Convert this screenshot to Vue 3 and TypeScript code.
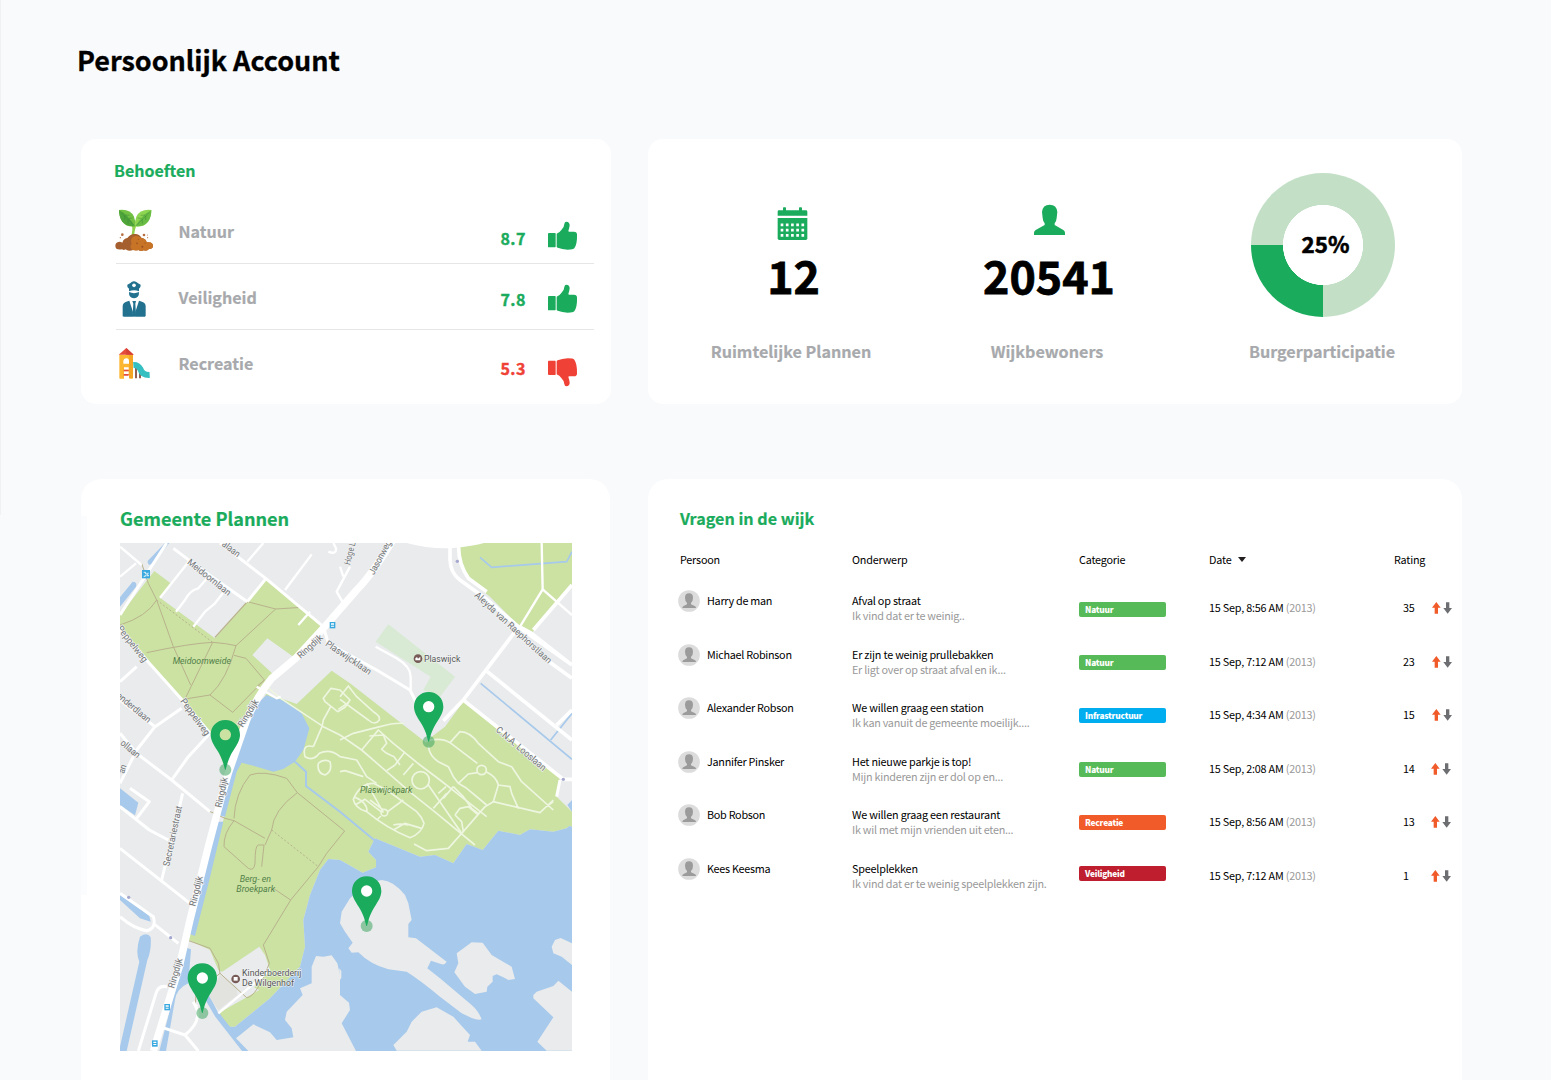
<script setup lang="ts">
interface Need {
  key: 'nature' | 'safety' | 'play'
  label: string
  score: string
  up: boolean
  scoreTop: number
  thumbTop: number
}

interface Question {
  name: string
  title: string
  excerpt: string
  category: string
  tone: string
  tagTop: number
  date: string
  rating: number
  arrowGap: number
}

interface MapLabel {
  text: string
  x: number
  y: number
  angle: number
  width: number
}

const needs: Need[] = [
  { key: 'nature', label: 'Natuur', score: '8.7', up: true, scoreTop: 29, thumbTop: 23 },
  { key: 'safety', label: 'Veiligheid', score: '7.8', up: true, scoreTop: 24, thumbTop: 20 },
  { key: 'play', label: 'Recreatie', score: '5.3', up: false, scoreTop: 27, thumbTop: 26.5 },
]

const questions: Question[] = [
  { name: 'Harry de man', title: 'Afval op straat', excerpt: 'Ik vind dat er te weinig..', category: 'Natuur', tone: 'green', tagTop: 12, date: '15 Sep, 8:56 AM', rating: 35, arrowGap: 29 },
  { name: 'Michael Robinson', title: 'Er zijn te weinig prullebakken', excerpt: 'Er ligt over op straat afval en ik...', category: 'Natuur', tone: 'green', tagTop: 11.5, date: '15 Sep, 7:12 AM', rating: 23, arrowGap: 29 },
  { name: 'Alexander Robson', title: 'We willen graag een station', excerpt: 'Ik kan vanuit de gemeente moeilijk....', category: 'Infrastructuur', tone: 'blue', tagTop: 11, date: '15 Sep, 4:34 AM', rating: 15, arrowGap: 29 },
  { name: 'Jannifer Pinsker', title: 'Het nieuwe parkje is top!', excerpt: 'Mijn kinderen zijn er dol op en...', category: 'Natuur', tone: 'green', tagTop: 11.5, date: '15 Sep, 2:08 AM', rating: 14, arrowGap: 28 },
  { name: 'Bob Robson', title: 'We willen graag een restaurant', excerpt: 'Ik wil met mijn vrienden uit eten...', category: 'Recreatie', tone: 'orange', tagTop: 11, date: '15 Sep, 8:56 AM', rating: 13, arrowGap: 28 },
  { name: 'Kees Keesma', title: 'Speelplekken', excerpt: 'Ik vind dat er te weinig speelplekken zijn.', category: 'Veiligheid', tone: 'red', tagTop: 8.5, date: '15 Sep, 7:12 AM', rating: 1, arrowGap: 28 },
]

const streetLabels: MapLabel[] = [
  { text: 'alaan', x: 334, y: 136, angle: 37, width: 60 },
  { text: 'Meidoornlaan', x: 230, y: 190, angle: 38.5, width: 158 },
  { text: 'Peppelweg', x: 20, y: 386, angle: 52, width: 130 },
  { text: 'Peppelweg', x: 210, y: 604, angle: 54, width: 130 },
  { text: 'enderdlaan', x: 18, y: 590, angle: 40, width: 124 },
  { text: 'ollaan', x: 29, y: 732, angle: 40, width: 68 },
  { text: 'an', x: 42, y: 822, angle: -72, width: 26 },
  { text: 'Ringdijk', x: 572, y: 477, angle: -42, width: 92 },
  { text: 'Ringdijk', x: 398, y: 683, angle: -58, width: 92 },
  { text: 'Ringdijk', x: 334, y: 924, angle: -78, width: 92 },
  { text: 'Ringdijk', x: 256, y: 1220, angle: -76, width: 92 },
  { text: 'Ringdijk', x: 192, y: 1466, angle: -74, width: 92 },
  { text: 'Plaswijcklaan', x: 644, y: 436, angle: 34, width: 160 },
  { text: 'Hoge L', x: 720, y: 196, angle: -76, width: 70 },
  { text: 'Jasonweg', x: 792, y: 226, angle: -62, width: 112 },
  { text: 'Secretariestraat', x: 178, y: 1100, angle: -78, width: 184 },
  { text: 'Aleyda van Raephorstlaan', x: 1092, y: 288, angle: 42.5, width: 302 },
  { text: 'C.N.A. Looslaan', x: 1156, y: 692, angle: 40.5, width: 188 },
]

const pins = [
  { x: 346, y: 660, hole: '#cbe2a3' },
  { x: 956, y: 576, hole: '#ffffff' },
  { x: 770, y: 1129, hole: '#ffffff' },
  { x: 277, y: 1390, hole: '#ffffff' },
]
</script>

<template>
  <main class="page">
    <h1 class="page-title">Persoonlijk Account</h1>

    <div class="grid">
      <section class="card needs">
        <h2 class="card-title">Behoeften</h2>
        <ul class="need-list">
          <li v-for="need in needs" :key="need.key" class="need" :class="need.key">
            <span class="need-icon">
              <svg v-if="need.key === 'nature'" width="40" height="44" viewBox="132 234 120 132">
                <path d="M188 318q4-20 2-32M189 316q2-22 8-32" fill="none" stroke="#8fd04c" stroke-width="7" />
                <path d="M147 240q34-4 45 20 6 14 3 29-24 4-38-14-10-14-10-35z" fill="#72c043" />
                <path d="M147 240q28 14 47 48-24 4-38-14-9-14-9-34z" fill="#4fa53a" />
                <path d="M244 240q-33-4-45 20-6 14-3 29 24 4 38-14 10-14 10-35z" fill="#8ed552" />
                <path d="M244 240q-28 14-47 48 24 4 38-14 9-14 9-34z" fill="#68bb43" />
                <path d="M154 248l38 38M164 258v12m10-2v13m-8-26l13 1m-2 9l11-1M237 248l-38 38M227 258v12m-10-2v13m8-26l-13 1m2 9l-11-1" fill="none" stroke="#347f35" stroke-width="1.3" />
                <path d="M136 347q0-11 12-12 6 0 9 3 3-12 15-14 10-13 23-12 12-1 20 12 13 2 15 13 19-3 19 11 0 9-12 9-6 7-16 4-7 4-16-1-7 2-14-1-15 7-25-1-4 4-10 0-20 3-20-11z" fill="#a55f2e" />
                <path d="M185 358q-7-8 0-17-5-11 3-20 12-8 26 3 14 1 16 13 19-3 19 11 0 9-12 9-6 7-16 4-7 4-16-1-10 4-20-2z" fill="#c87427" />
                <g fill="#96501f"><circle cx="201" cy="340" r="2.500" /><circle cx="217" cy="350" r="3" /><circle cx="205" cy="328" r="1.600" /><circle cx="225" cy="339" r="1.600" /></g>
                <g fill="#b66e43"><circle cx="157" cy="314" r="4" /><circle cx="222" cy="315" r="4" /><circle cx="151" cy="323" r="2" /><circle cx="233" cy="323" r="1.7" /><circle cx="232" cy="315" r="1.5" /></g>
              </svg>
              <svg v-else-if="need.key === 'safety'" width="28" height="38" viewBox="150 450 84 114">
                <g fill="#21718f">
                  <path d="M172 464q10-4 13-8 7-5 14 0 4 4 13 8 1 7-5 12v8q-15-6-30 0v-8q-7-5-5-12z" />
                  <path d="M177 486q15 7 30 0 1 18-15 19-16-1-15-19z" />
                  <path d="M158 559v-30q0-11 11-14l9-3 11 34-1 13zM227 559v-30q0-11-11-14l-9-3-11 34 1 13z" />
                  <path d="M187 513h11l-2 8 2 32-5 6-5-6 2-32z" />
                  <path d="M160 552h65v8h-65z" />
                </g>
                <circle cx="192" cy="466" r="5.5" fill="#fff" />
              </svg>
              <svg v-else width="33" height="33" viewBox="144 651 99 99">
                <path d="M198 710v35m12-30v30" stroke="#7c4134" stroke-width="5" />
                <path d="M190 705q14-1 21 12 6 19 28 18" fill="none" stroke="#36bfc0" stroke-width="18" />
                <path d="M148 674h41v70q0 2-2 2h-9v-12h-16v12h-12q-2 0-2-2z" fill="#fdb62f" />
                <path d="M189 674v70h-12v-70z" fill="#f5a524" />
                <path d="M146 674l23-20 22 20z" fill="#e54b3c" />
                <path d="M169 654l22 20h-22z" fill="#d63f34" />
                <path d="M160 701v-7q1-9 9-9t8 9v7zM162 712h14v7h-14zm0 12h14v8h-14zm0 13h14v9h-14z" fill="#fff" />
                <path d="M161 719h15v5h-15zm0 13h15v5h-15z" fill="#e54b3c" />
              </svg>
            </span>
            <span class="need-label">{{ need.label }}</span>
            <span class="score" :class="{ low: !need.up }" :style="{ marginTop: need.scoreTop + 'px' }">{{ need.score }}</span>
            <svg class="thumb" :class="{ low: !need.up }" :style="{ marginTop: need.thumbTop + 'px' }" width="31" height="30" viewBox="231 273 93 90">
              <path d="M237 309h18q2 0 2 2v38q0 3-2 3h-19q-2 0-2-2v-38q0-3 3-3z" />
              <path d="M260 311q9-3 14-11 9-9 9-18 1-7 6-7 10 1 10 11-1 9-4 17 0 2 3 2h14q9 1 9 8 1 29-8 42-3 4-20 4-17-1-30-6-3-1-3-3z" />
            </svg>
          </li>
        </ul>
      </section>

      <section class="card stats">
        <div class="stat">
          <svg class="stat-icon" width="31" height="34" viewBox="261 141 93 102">
            <path d="M266 151h13v-7q0-2 2-2h5q2 0 2 2v7h39v-7q0-2 2-2h4q3 0 3 2v7h12q4 0 4 4v12h-89v-12q0-4 3-4z" fill="#1aab5c" />
            <path d="M263 174h89v61q0 5-5 5h-79q-5 0-5-5z" fill="#1aab5c" />
            <path d="M272 194.500h76M272 210.500h76M272 226h76" stroke="#fff" stroke-width="8" stroke-dasharray="8 7.600" />
          </svg>
          <strong class="stat-value plans">12</strong>
          <span class="stat-label">Ruimtelijke Plannen</span>
        </div>
        <div class="stat people">
          <svg class="stat-icon person-icon" width="33" height="32" viewBox="1029 132 99 96">
            <path d="M1079 134q21 0 23 22l-2 18q-1 11-6 16v5l26 15q5 3 5 8v7h-93v-7q0-5 5-8l27-15v-5q-5-5-6-16l-2-18q2-22 23-22z" fill="#1aab5c" />
          </svg>
          <strong class="stat-value">20541</strong>
          <span class="stat-label">Wijkbewoners</span>
        </div>
        <div class="stat share">
          <div class="donut"><span>25%</span></div>
          <span class="stat-label">Burgerparticipatie</span>
        </div>
      </section>

      <section class="card plans-card">
        <h2 class="card-title">Gemeente Plannen</h2>
        <svg class="map" width="452" height="508" viewBox="30 129 1356 1524">
          <rect x="30" y="129" width="1356" height="1524" fill="#e9ebed" />

          <!-- parks -->
          <g fill="#cbe2a3">
            <path d="M133 213L182 250 150 293 315 415 412 305 468 236 640 380 552 472 472 415 427 465 492 525 440 590 372 720 345 800 300 700 118 490 30 385V345z" />
            <path d="M560 612L665 512 720 550 945 725 1005 680 1062 602 1350 830 1340 890 1386 935V980L1378 978 1370 985 1330 995 1260 988 1230 1005 1165 992 1118 1050 1070 1032 1030 1090 975 1065 930 1070 795 1015 775 1055 798 1080V1102L758 1118 690 1080 655 1077 630 1110 600 1185 580 1260 585 1340 570 1400 480 1495 375 1580 345 1580 325 1540 448 1470 325 1410 300 1350 225 1315 300 1110 375 830 395 700 470 580z" />
            <path d="M1042 140L1105 129H1386V255L1265 400 1230 382 1140 290 1070 235 1045 180z" />
          </g>
          <path d="M835 373L1035 530 990 590 940 570 962 530 797 425z" fill="#d8ead3" />
          <path d="M890 129Q960 148 1030 144 1090 138 1122 129z" fill="#fff" />

          <!-- water -->
          <g fill="#a7c9eb">
            <path d="M470 585L485 592 520 600 548 618 575 640 598 685 590 715 580 750 555 785 520 807 490 815 440 800 395 788 380 815 345 950 325 945 358 820 385 740 405 660 440 612z" />
            <path d="M320 965H340L298 1140 255 1308 238 1302 275 1150z" />
            <path d="M225 1342L243 1348 235 1450Q200 1465 195 1500L168 1653H148L190 1490z" />
            <path d="M90 1310Q112 1295 122 1312 125 1350 112 1380L50 1653H30V1640L88 1385Q75 1355 90 1310z" />
            <path d="M30 865L85 908 75 946 30 915zM30 1178L118 1248 122 1265 90 1255 30 1200zM30 292L68 245Q82 245 78 260L30 320zM113 183L165 129H178L124 193Q113 198 113 183z" />
            <path d="M655 1077L690 1080 758 1118 798 1102V1080L775 1055 795 1015 930 1070 975 1065 1030 1090 1070 1032 1118 1050 1165 992 1230 1005 1260 988 1330 995 1370 985 1378 978 1386 980V1653H400L320 1550 330 1540 345 1580H375L480 1495 570 1400 585 1340 580 1260 600 1185 630 1110zM1372 915L1386 900V935z" />
          </g>
          <g fill="none" stroke="#a7c9eb">
            <path d="M555 785L588 815V858L690 935 795 1022" stroke-width="6" />
            <path d="M290 1490L322 1545 408 1655" stroke-width="16" />
            <path d="M1110 172L1145 202 1370 185 1386 155M1112 550L1386 778M1322 720L1386 640" stroke-width="5" />
          </g>

          <!-- islands and shore -->
          <g fill="#e9ebed">
            <path d="M378 1615L430 1573 480 1597 500 1620 550 1612 545 1585 525 1560 530 1535 578 1485 570 1465 605 1450V1400L618 1368 640 1370 665 1366 682 1390 690 1425V1485L717 1508 720 1530 695 1570 738 1653H415z" />
            <g transform="translate(690 840)">
              <path d="M125 300Q160 302 195 345L205 370 215 420 205 432V472L228 475 320 545Q315 555 305 553L273 542 262 565 300 595 395 675Q415 692 425 718 415 722 395 714L365 700 300 650Q240 600 200 575L145 568Q90 553 55 517L35 518 25 505 38 488 15 455 0 430 5 395 30 355 80 310z" />
              <path d="M395 487L428 488 455 525 515 560 525 597 505 600 490 592 470 583 458 588V605L442 620 440 635 405 642 375 620 343 577 355 550 350 520z" />
              <path d="M635 500L645 480 662 474 696 490V555L665 530 640 520zM580 645L590 635 640 618 655 602 696 635V812H620L592 785 640 712 580 655zM160 795L200 755 215 725 245 695 290 682 340 710 390 765 383 785 405 785 425 812H170z" />
              <path d="M-2 565l6 8v20l-6 10z" />
            </g>
            <path d="M330 1420L448 1340 465 1365 480 1410 430 1465 325 1540 300 1490 308 1450z" />
          </g>
          <path d="M330 1425L380 1460 382 1485 325 1530 298 1490z" fill="#e2e3df" />

          <!-- footpaths in the parks -->
          <g fill="none" stroke="#b9b28c" stroke-width="3">
            <path d="M95 190L115 250 140 300 190 440 242 555M30 375Q110 350 140 300M110 458Q240 430 308 427 350 430 378 437L497 327 575 322M412 305L497 327M308 427L225 597 300 585Q350 540 378 437M372 466L408 475 463 540 368 637 300 585M463 540L440 560" />
            <path d="M412 305L315 412" stroke-width="4" />
            <path d="M140 300L308 427" stroke-dasharray="6 6" />
            <path d="M530 835Q460 810 420 825 375 880 372 955M530 835L562 878 704 993 650 1060 625 1100 542 1200 460 1335 478 1390Q440 1490 410 1493L330 1420M562 878Q490 930 485 990L465 1035M465 1015L372 962 345 955 290 930M372 962Q340 1000 342 1040L415 1105Q432 1115 435 1090 435 1035 445 1035H462L455 1100M490 1165L542 1200M225 1318L300 1345 325 1390 330 1420 258 1480 256 1520" />
            <path d="M485 990L625 1100" stroke-dasharray="6 6" />
          </g>

          <!-- pale paths of Plaswijckpark -->
          <g fill="none" stroke="#eef6df" stroke-width="5" stroke-linejoin="round">
            <path d="M470 560L512 595 640 680 690 705 755 750 905 880 980 940 1095 1035" />
            <path d="M755 750L805 690 850 730 930 795 990 840 1130 950" />
            <path d="M640 595L663 565 690 570 720 600 705 622 683 635 645 605zM663 618L640 660 636 680 610 740" />
            <path d="M690 590L715 558 740 590 790 635Q812 648 808 660 795 678 775 660L690 598M685 628L715 608" />
            <path d="M690 720L730 700 810 680Q850 668 882 670M778 708L820 705 830 730 815 748 830 760 852 770 870 795" />
            <path d="M855 795L885 755M830 812L855 795M910 790L880 825M985 880L1008 860M970 925L1010 880M1000 895L1030 860" />
            <path d="M610 740Q575 730 585 770 610 785 628 760 660 745 690 770L740 780 770 830 800 850M625 790Q620 820 645 825 668 815 660 785 640 775 625 790M690 815L705 812 760 830" />
            <path d="M955 740Q960 770 985 785L1015 800 1030 830 1045 850 1070 865 1130 915M945 725Q990 710 1020 728L1102 790M1020 728L1050 695Q1080 695 1105 730L1165 785 1205 800 1235 845 1330 930M1045 850L1075 822 1102 818M1128 815Q1160 830 1165 855L1150 905 1290 938 1330 900M1165 855L1200 860 1205 880 1225 925M1310 920L1330 905" />
            <path d="M955 855L1055 1000 1015 1045 950 1052 912 1032M1055 1000L1125 920 1150 905M1030 860L1060 890 1085 925 1105 940M1035 945L1050 925 1075 920 1105 945M1035 945L1055 965 1060 995" />
            <path d="M790 850Q750 850 730 898 735 925 770 935 830 985 900 1013 935 1000 942 970 935 950 920 935L830 870 790 850M735 892Q775 910 770 935M770 850Q800 900 820 938M735 915L765 898 813 935M833 935L880 900M813 948L800 960M780 900L820 930M850 990L885 970 935 985M850 975Q870 970 895 975" />
            <circle cx="932" cy="841" r="26" /><circle cx="1115" cy="810" r="14" /><circle cx="823" cy="938" r="10" />
          </g>

          <!-- streets -->
          <g fill="none" stroke="#fff" stroke-linejoin="round">
            <path d="M860 100Q790 220 740 270L640 385 560 472 485 535Q440 590 410 660L355 820 332 900 295 1040 240 1260 208 1400 130 1653" stroke-width="22" />
            <path d="M330 129L468 236 640 380 655 430 800 510 900 570 945 660" stroke-width="9" />
            <path d="M30 385L118 490 212 595 300 700M412 305L468 236M190 145L270 205 412 305M170 129L30 345" stroke-width="9" />
            <path d="M412 185L460 129M525 270L605 163M240 180L150 293M300 225L265 265Q240 270 225 300L198 335M350 265L315 310 285 335 250 380M565 375L600 335M30 140L95 195M30 230L78 190M720 200L680 275 700 310" stroke-width="7" />
            <path d="M215 625L135 680 30 600M135 680L80 750 30 850M30 700L80 760 185 840 300 935M300 700L235 770 185 840M30 545L80 500M30 920L118 990 175 1020M60 865L118 905 80 955M218 880L155 1140M30 1045L240 1210M30 1180L130 1250Q140 1285 110 1292 70 1285 30 1250M130 1270L205 1330M172 1460Q145 1455 138 1480L85 1653M158 1583L225 1605 265 1653M225 1605Q270 1570 262 1530L250 1505" stroke-width="9" />
            <path d="M1020 140V180Q1022 220 1050 240L1130 298 1225 380 1386 495M1046 140Q1045 190 1075 235L1130 275M1225 382L1060 600 1000 662M1132 515L1386 720M1340 675L1386 630M1386 535L1310 480M1232 382L1265 400 1386 495M1062 602L1360 838 1386 838M1270 390L1386 255" stroke-width="11" />
            <path d="M1295 129L1298 268 1230 380M1298 268L1386 345M797 440L860 475Q902 500 902 530V570M655 155Q680 165 678 145L670 129M690 330L700 310M690 200L700 230" stroke-width="7" />
            <path d="M440 560L500 595 512 590M250 1510L262 1520M325 1540L480 1410" stroke-width="7" />
            <path d="M1350 840L1340 890" stroke-width="9" />
          </g>

          <!-- transit stops -->
          <g>
            <rect x="96" y="210" width="24" height="25" fill="#39a9df" />
            <path d="M101 217h6v5h7v-4m-13 11h5v-4m5 4v-4h4v4" stroke="#fff" stroke-width="2.500" fill="none" />
            <g v-for="stop in [[659, 366], [163, 1512], [126, 1621]]" :key="stop[1]">
              <rect :x="stop[0]" :y="stop[1]" width="17" height="19" fill="#39a9df" />
              <path :d="`M${stop[0] + 4} ${stop[1] + 4}h9v4h-9zm0 7h9v3h-9z`" fill="#fff" />
            </g>
            <g fill="#a5a7cf"><circle cx="1042" cy="184" r="5" /><circle cx="1360" cy="838" r="5" /><circle cx="182" cy="1313" r="5" /><circle cx="56" cy="1192" r="5" /></g>
          </g>

          <!-- labels -->
          <g class="street">
            <text v-for="(label, i) in streetLabels" :key="i" :transform="`translate(${label.x} ${label.y}) rotate(${label.angle})`" :textLength="label.width" lengthAdjust="spacingAndGlyphs">{{ label.text }}</text>
          </g>
          <g class="park">
            <text x="188" y="491" textLength="175" lengthAdjust="spacingAndGlyphs">Meidoornweide</text>
            <text x="750" y="879" textLength="157" lengthAdjust="spacingAndGlyphs">Plaswijckpark</text>
            <text x="389" y="1145" textLength="94" lengthAdjust="spacingAndGlyphs">Berg- en</text>
            <text x="379" y="1175" textLength="116" lengthAdjust="spacingAndGlyphs">Broekpark</text>
          </g>
          <g class="place">
            <circle cx="924" cy="476" r="13" fill="#765b57" />
            <path d="M916 481v-6l5-4 3 5 7-6v11z" fill="#fff" />
            <text x="942" y="485" textLength="109" lengthAdjust="spacingAndGlyphs">Plaswijck</text>
            <circle cx="377" cy="1437" r="13" fill="#765b57" />
            <rect x="371" y="1431" width="12" height="11" fill="#fff" />
            <text x="396" y="1428" textLength="178" lengthAdjust="spacingAndGlyphs">Kinderboerderij</text>
            <text x="396" y="1457" textLength="156" lengthAdjust="spacingAndGlyphs">De Wilgenhof</text>
          </g>

          <!-- plan markers -->
          <g v-for="pin in pins" :key="pin.y" :transform="`translate(${pin.x} ${pin.y})`">
            <circle cx="0" cy="149" r="18" fill="#3fa660" fill-opacity=".55" />
            <path d="M0 0C25 0 44 19 44 44 44 61 34 75 25 90 13 108 7 124 1 149H-1C-7 124-13 108-25 90-34 75-44 61-44 44-44 19-25 0 0 0z" fill="#1aab5c" />
            <circle cx="0" cy="44" r="17" :fill="pin.hole" />
          </g>
        </svg>
      </section>

      <section class="card questions">
        <h2 class="card-title">Vragen in de wijk</h2>
        <div class="row head">
          <span>Persoon</span>
          <span>Onderwerp</span>
          <span>Categorie</span>
          <span class="sort">Date <i class="caret"></i></span>
          <span>Rating</span>
        </div>
        <div v-for="q in questions" :key="q.name" class="row">
          <div class="person">
            <svg width="22" height="22" viewBox="0 0 66 66">
              <circle cx="33" cy="33" r="32.500" fill="#dcdcdc" />
              <path d="M33 10q12 0 12 13 0 11-6 16v4l11 5q4 2 4 6H13q0-4 4-6l10-5v-4q-6-5-6-16 0-13 12-13z" fill="#9b9b9b" />
            </svg>
            <span>{{ q.name }}</span>
          </div>
          <div class="subject">
            <span>{{ q.title }}</span>
            <span class="muted">{{ q.excerpt }}</span>
          </div>
          <div>
            <span class="tag" :class="q.tone" :style="{ marginTop: q.tagTop + 'px' }">{{ q.category }}</span>
          </div>
          <div class="date">{{ q.date }} <span class="muted">(2013)</span></div>
          <div class="rating">
            <span :style="{ width: q.arrowGap + 'px' }">{{ q.rating }}</span>
            <svg width="21" height="14" viewBox="0 0 63 42">
              <path d="M13 3L26 20H18V38H8V20H0z" fill="#f15a29" />
              <path d="M47 38L60 21H52V4H42V21H34z" fill="#6d6e71" />
            </svg>
          </div>
        </div>
      </section>
    </div>
  </main>
</template>

<style>
body {
  background: #f9fafc;
}
</style>

<style scoped>
.page {
  box-sizing: border-box;
  width: 1551px;
  height: 1080px;
  overflow: hidden;
  padding: 38px 89px 0 81px;
  background: linear-gradient(#eff1f3, #eff1f3) 0 0 / 1px 515px no-repeat #f9fafc;
  color: #000;
  font-family: "Noto Sans CJK JP", "Noto Sans CJK SC", "Open Sans", sans-serif;
}
.page-title {
  margin: 0 0 57px -4px;
  font-size: 27px;
  line-height: 44px;
  font-weight: 700;
  letter-spacing: -0.03px;
  -webkit-text-stroke: 0.3px;
}
.grid {
  display: grid;
  grid-template-columns: 530px 814px;
  grid-template-rows: 265px 640px;
  column-gap: 37px;
  row-gap: 75px;
}
.card {
  box-sizing: border-box;
  background: #fff;
  border-radius: 15px;
}
.card-title {
  margin: 0;
  color: #1aab5c;
  font-size: 16px;
  line-height: 24px;
  font-weight: 700;
  -webkit-text-stroke: 0.2px;
}
.needs {
  padding: 19px 17px 0 35px;
}
.needs .card-title {
  margin-left: -2px;
}
.need-list {
  list-style: none;
  margin: 16px 0 0;
  padding: 0;
}
.need {
  box-sizing: border-box;
  height: 66px;
  display: flex;
  align-items: flex-start;
  border-bottom: 1px solid #e6e6e6;
}
.need:last-child {
  border-bottom: 0;
}
.need-icon {
  width: 64px;
  margin-left: -2px;
  display: flex;
}
.nature .need-icon svg {
  margin-top: 10px;
}
.safety .need-icon svg {
  margin: 16px 0 0 6px;
}
.play .need-icon svg {
  margin: 17px 0 0 4px;
}
.need-label {
  width: 322px;
  margin-top: 21px;
  padding-left: 0.5px;
  box-sizing: border-box;
  color: #a7a9ac;
  font-size: 16.100px;
  line-height: 24px;
  font-weight: 700;
  -webkit-text-stroke: 0.2px;
}
.score {
  box-sizing: border-box;
  width: 47px;
  padding-left: 0.5px;
  color: #1aab5c;
  font-size: 16px;
  line-height: 22px;
  font-weight: 700;
  letter-spacing: 0.4px;
  -webkit-text-stroke: 0.4px;
}
.score.low {
  color: #ef4136;
}
.thumb {
  fill: #1aab5c;
}
.thumb.low {
  fill: #ef4136;
  transform: scaleY(-1);
}
.stats {
  display: grid;
  grid-template-columns: 286px 230px 298px;
}
.stat {
  display: flex;
  flex-direction: column;
  align-items: center;
}
.stat-icon {
  margin: 68px 0 0 2px;
}
.stat-icon.person-icon {
  margin: 65px 0 5px;
}
.stat-value {
  margin-top: 4px;
  height: 64px;
  font-size: 44.700px;
  line-height: 60px;
  font-weight: 700;
  -webkit-text-stroke: 0.8px;
}
.stat-value.plans {
  margin-left: 5px;
}
.stat-label {
  margin-top: 30px;
  color: #a7a9ac;
  font-size: 16.150px;
  line-height: 24px;
  font-weight: 700;
  -webkit-text-stroke: 0.2px;
}
.people .stat-label {
  margin-left: -4px;
}
.share {
  padding-left: 18px;
}
.donut {
  width: 144px;
  height: 144px;
  margin: 34px 0 -8px 2px;
  border-radius: 50%;
  display: flex;
  align-items: center;
  justify-content: center;
  background: radial-gradient(circle, #fff 39.800px, transparent 40.300px), conic-gradient(#c3e0c7 0 50%, #1aab5c 50% 75%, #c3e0c7 75%);
  font-size: 22.300px;
  line-height: 30px;
  font-weight: 700;
  -webkit-text-stroke: 0.6px;
}
.donut span {
  padding: 0 0 4px 5px;
}
.plans-card,
.questions {
  border-radius: 20px;
}
.plans-card {
  width: 529px;
  padding: 27px 0 0 39px;
  background: linear-gradient(#fbfcfd, #fbfcfd) 0 37px / 6px 379px no-repeat #fff;
}
.plans-card .card-title {
  font-size: 18.100px;
}
.map {
  display: block;
  margin-top: 13px;
}
.street text {
  font: 28px Roboto, sans-serif;
  fill: #707376;
  stroke: #f4f5f5;
  stroke-width: 4px;
  paint-order: stroke;
}
.park text {
  font: italic 27px Roboto, sans-serif;
  fill: #528047;
}
.place text {
  font: 28px Roboto, sans-serif;
  fill: #555;
  stroke: #f4f5f5;
  stroke-width: 3px;
  paint-order: stroke;
}
.questions {
  padding: 27px 0 0 32px;
  font-size: 10.800px;
  line-height: 15px;
  letter-spacing: -0.2px;
}
.questions .card-title {
  font-size: 16.150px;
  letter-spacing: 0;
}
.row {
  display: grid;
  grid-template-columns: 172px 227px 130px 185px 1fr;
  height: 53.500px;
}
.row.head {
  height: 38px;
  margin-top: 22px;
}
.sort {
  display: flex;
  align-items: flex-start;
}
.caret {
  margin: 5px 0 0 7px;
  border: 4.500px solid transparent;
  border-top: 5px solid #231f20;
  border-bottom: 0;
}
.person {
  display: flex;
  align-items: flex-start;
  gap: 7px;
  margin-left: -2px;
  letter-spacing: -0.27px;
}
.person span {
  margin-top: 3px;
}
.subject {
  display: flex;
  flex-direction: column;
  padding-top: 3px;
}
.muted {
  color: #999;
  letter-spacing: -0.25px;
}
.tag {
  display: block;
  box-sizing: border-box;
  width: 87px;
  height: 15px;
  padding-left: 6px;
  border-radius: 2px;
  color: #fff;
  font-size: 8.300px;
  line-height: 14px;
  font-weight: 900;
  letter-spacing: -0.2px;
}
.green {
  background: #57ba58;
}
.blue {
  background: #00aeef;
}
.orange {
  background: #f15a29;
}
.red {
  background: #be1e2d;
}
.date {
  padding-top: 10px;
}
.rating {
  display: flex;
  align-items: flex-start;
  padding: 10px 0 0 9px;
}
.rating svg {
  margin-top: 1px;
}
</style>
